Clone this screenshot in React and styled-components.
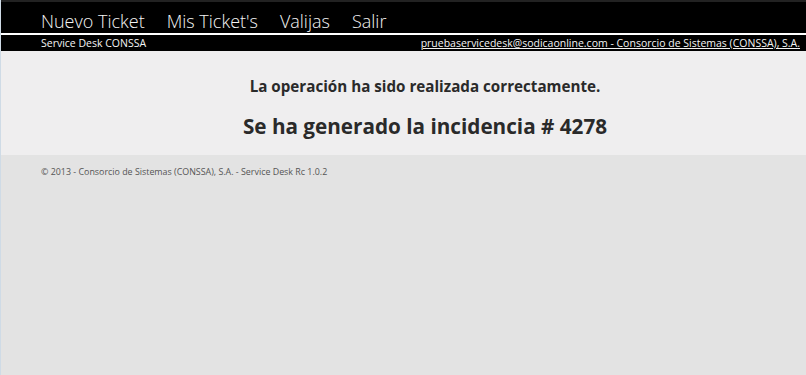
import React from 'react'
import styled, { createGlobalStyle } from 'styled-components'

const GlobalStyle = createGlobalStyle`
  html, body {
    margin: 0;
    padding: 0;
    height: 100%;
  }
  body {
    background-color: #e3e3e3;
    font-family: 'Open Sans', 'Noto Sans', sans-serif;
    border-left: 1px solid #cfdbe6;
  }
`

const Header = styled.header`
  background-color: #000;
  border-top: 2px solid #222;
`

const Nav = styled.nav`
  display: flex;
  align-items: flex-end;
  gap: 22px;
  height: 31px;
  padding-left: 40px;
  border-bottom: 2px solid #fff;
`

const NavLink = styled.a`
  color: #f4f4f4;
  font-weight: 300;
  font-size: 18px;
  line-height: 24px;
  text-decoration: none;
  cursor: pointer;
`

const SubBar = styled.div`
  display: flex;
  justify-content: space-between;
  align-items: center;
  height: 16px;
  padding: 0 6px 0 40px;
  color: #f4f4f4;
  font-size: 10.5px;
`

const UserLink = styled.a`
  color: #f4f4f4;
  text-decoration: underline;
`

const Main = styled.main`
  background-color: #efeeef;
  display: flex;
  flex-flow: column nowrap;
  align-items: center;
  padding: 24px 0 13px 43px;
`

const Message = styled.h2`
  margin: 0;
  color: #2a2a2a;
  font-size: 15.2px;
  font-weight: 700;
  line-height: 22px;
`

const Incident = styled.h1`
  margin: 13px 0 0;
  color: #2a2a2a;
  font-size: 20.7px;
  font-weight: 700;
  line-height: 32px;
`

const Footer = styled.footer`
  padding: 10px 40px;
  color: #555;
  font-size: 8.9px;
  line-height: 14px;
`

const App = () => (
  <>
    <GlobalStyle />
    <Header>
      <Nav>
        <NavLink>Nuevo Ticket</NavLink>
        <NavLink>Mis Ticket's</NavLink>
        <NavLink>Valijas</NavLink>
        <NavLink>Salir</NavLink>
      </Nav>
      <SubBar>
        <span>Service Desk CONSSA</span>
        <UserLink>pruebaservicedesk@sodicaonline.com - Consorcio de Sistemas (CONSSA), S.A.</UserLink>
      </SubBar>
    </Header>
    <Main>
      <Message>La operación ha sido realizada correctamente.</Message>
      <Incident>Se ha generado la incidencia # 4278</Incident>
    </Main>
    <Footer>© 2013 - Consorcio de Sistemas (CONSSA), S.A. - Service Desk Rc 1.0.2</Footer>
  </>
)

export default App
